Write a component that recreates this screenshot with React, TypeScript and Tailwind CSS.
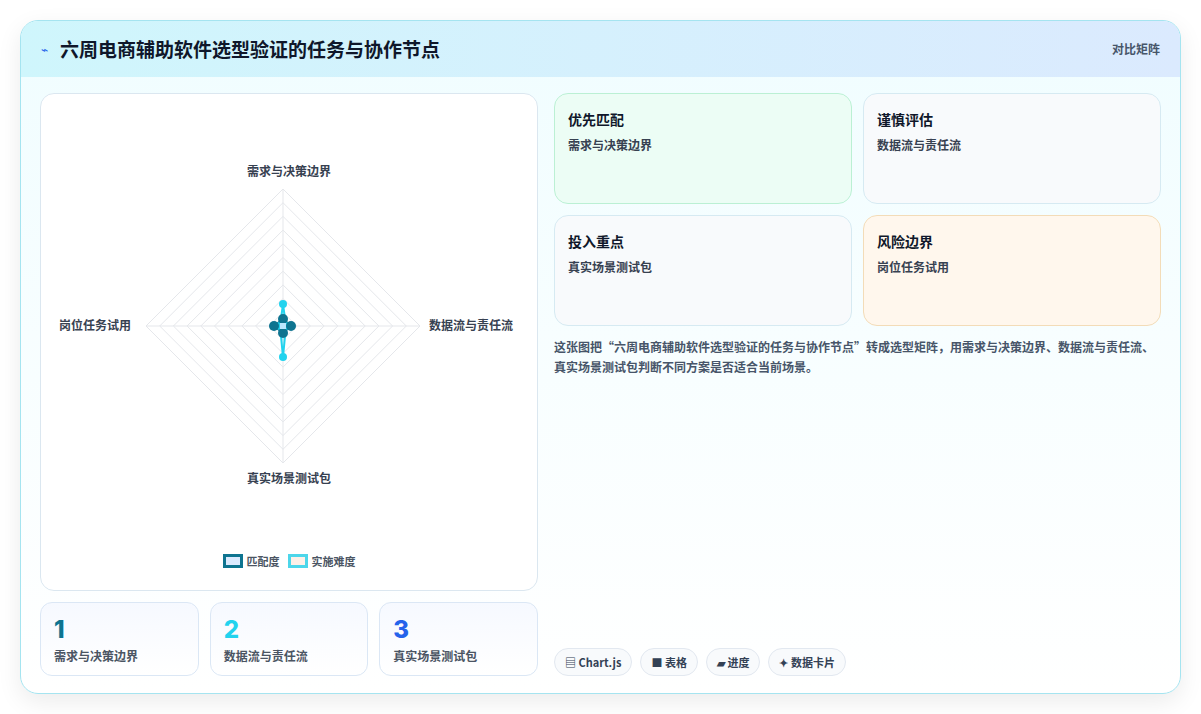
import React from "react";

const cx = 282 - 40, cy = 325 - 93;
const R = 137;
function pts(v: number[]) {
  // order: top, right, bottom, left
  return [
    [cx, cy - v[0]],
    [cx + v[1], cy],
    [cx, cy + v[2]],
    [cx - v[3], cy],
  ];
}
function Radar() {
  const rings = Array.from({ length: 10 }, (_, i) => ((i + 1) * R) / 10);
  const a = pts([7, 8, 7, 9]);
  const b = pts([22, 3, 31, 3]);
  return (
    <svg width="496" height="496" className="absolute left-0 top-0">
      {rings.map((r, i) => (
        <polygon key={i} points={`${cx},${cy - r} ${cx + r},${cy} ${cx},${cy + r} ${cx - r},${cy}`} fill="none" stroke="#e5e7eb" strokeWidth="1" />
      ))}
      <line x1={cx} y1={cy - R} x2={cx} y2={cy + R} stroke="#e5e7eb" />
      <line x1={cx - R} y1={cy} x2={cx + R} y2={cy} stroke="#e5e7eb" />
      <polygon points={b.map((p) => p.join(",")).join(" ")} fill="rgba(34,211,238,0.15)" stroke="#22d3ee" strokeWidth="2" />
      <polygon points={a.map((p) => p.join(",")).join(" ")} fill="rgba(8,145,178,0.2)" stroke="#0e7490" strokeWidth="2" />
      {b.map((p, i) => <circle key={"b" + i} cx={p[0]} cy={p[1]} r="4" fill="#22d3ee" />)}
      {a.map((p, i) => <circle key={"a" + i} cx={p[0]} cy={p[1]} r="5" fill="#0e7490" />)}
      <rect x={cx - 3} y={cy - 3} width="6" height="6" fill="#bae6fd" />
    </svg>
  );
}

export default function App() {
  const font = { fontFamily: '"Noto Sans CJK SC", "Noto Sans", sans-serif' };
  return (
    <div className="w-[1201px] h-[714px] bg-white p-5 pt-5" style={font}>
      <div className="w-[1161px] h-[674px] rounded-[18px] border border-[#a5e4f0] bg-gradient-to-b from-[#f0fdff] to-white shadow-[0_8px_24px_rgba(0,0,0,0.08)] overflow-hidden flex flex-col">
        <div className="h-[56px] flex items-center justify-between px-5 bg-gradient-to-r from-[#cff6fc] to-[#dbeafe]">
          <div className="flex items-center gap-3">
            <span className="text-[#2563eb] text-[12px]">⌁</span>
            <span className="text-[19px] font-bold text-[#0f172a]">六周电商辅助软件选型验证的任务与协作节点</span>
          </div>
          <span className="text-[12px] text-[#475569] font-semibold">对比矩阵</span>
        </div>
        <div className="flex-1 flex gap-4 px-[19px] pt-4 pb-[17px]">
          <div className="w-[498px] flex flex-col gap-[11px]">
            <div className="relative h-[498px] rounded-[14px] border border-[#dbe7f0] bg-white">
              <Radar />
              <div className="absolute left-0 right-0 top-[68px] text-center text-[12px] font-semibold text-[#374151]">需求与决策边界</div>
              <div className="absolute left-0 right-0 top-[375px] text-center text-[12px] font-semibold text-[#374151]">真实场景测试包</div>
              <div className="absolute left-[18px] top-[222px] text-[12px] font-semibold text-[#374151]">岗位任务试用</div>
              <div className="absolute left-[388px] top-[222px] text-[12px] font-semibold text-[#374151]">数据流与责任流</div>
              <div className="absolute left-0 right-0 top-[459px] flex justify-center items-center gap-2 text-[11px] font-semibold text-[#4b5563]">
                <span className="flex items-center gap-1"><span className="w-[20px] h-[14px] border-[3px] border-[#0e7490] bg-[#dbeafe]" />匹配度</span>
                <span className="flex items-center gap-1"><span className="w-[20px] h-[14px] border-[3px] border-[#4dd6ea] bg-[#fdf0e8]" />实施难度</span>
              </div>
            </div>
            <div className="flex gap-[11px]">
              {[["1", "text-[#0e7490]", "需求与决策边界"], ["2", "text-[#22d3ee]", "数据流与责任流"], ["3", "text-[#2563eb]", "真实场景测试包"]].map(([n, c, t]) => (
                <div key={n} className="flex-1 h-[74px] rounded-[12px] border border-[#dbe7f5] bg-gradient-to-b from-[#f6f9ff] to-white px-[13px] pt-[12px]">
                  <div className={`text-[24px] font-extrabold leading-[30px] ${c}`} style={{ fontFamily: "Inter, sans-serif" }}>{n}</div>
                  <div className="text-[12px] font-semibold text-[#4b5563] mt-[2px]">{t}</div>
                </div>
              ))}
            </div>
          </div>
          <div className="flex-1 flex flex-col">
            <div className="grid grid-cols-2 gap-[11px]">
              {[["优先匹配", "需求与决策边界", "bg-[#ecfdf5] border-[#bbf0d4]"], ["谨慎评估", "数据流与责任流", "bg-[#f8fafc] border-[#d6eaf2]"], ["投入重点", "真实场景测试包", "bg-[#f8fafc] border-[#d6eaf2]"], ["风险边界", "岗位任务试用", "bg-[#fff7ed] border-[#f3dcb8]"]].map(([h, s, c]) => (
                <div key={h} className={`h-[111px] rounded-[14px] border px-[13px] pt-[15px] ${c}`}>
                  <div className="text-[14px] font-bold text-[#0f172a]">{h}</div>
                  <div className="text-[12px] font-semibold text-[#374151] mt-[6px]">{s}</div>
                </div>
              ))}
            </div>
            <p className="text-[12px] font-semibold text-[#475569] leading-[20px] mt-[11px]">这张图把“六周电商辅助软件选型验证的任务与协作节点”转成选型矩阵，用需求与决策边界、数据流与责任流、真实场景测试包判断不同方案是否适合当前场景。</p>
            <div className="mt-auto flex gap-2">
              {["▤ Chart.js", "■ 表格", "▰ 进度", "✦ 数据卡片"].map((t) => (
                <span key={t} className="h-[28px] px-[10px] flex items-center rounded-full border border-[#e2e8f0] bg-[#f8fafc] text-[11px] font-bold text-[#334155]">{t}</span>
              ))}
            </div>
          </div>
        </div>
      </div>
    </div>
  );
}
